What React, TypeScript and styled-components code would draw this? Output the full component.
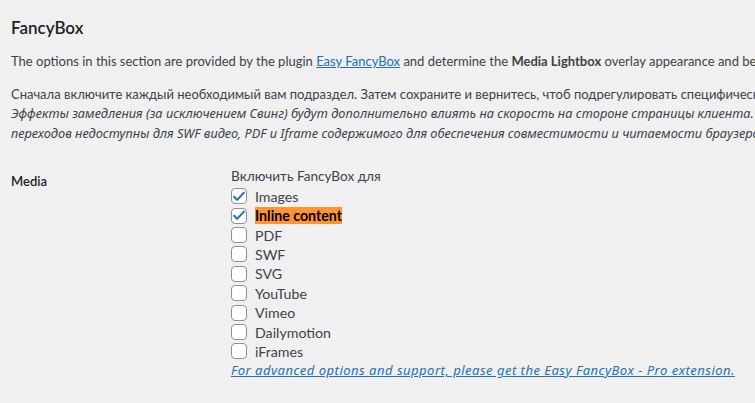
import React from "react";
import styled, { createGlobalStyle } from "styled-components";

const Global = createGlobalStyle`
  html, body {
    margin: 0;
    padding: 0;
    background: #f0f0f1;
    overflow: hidden;
  }
  body {
    font-family: "Lato", "Noto Sans", sans-serif;
    font-size: 13px;
    line-height: 1.5;
    color: #3c434a;
  }
`;

const Wrap = styled.div`
  padding: 0 0 0 11px;
  width: 1100px;
  white-space: nowrap;
`;

const Title = styled.h2`
  font-size: 17px;
  font-weight: 600;
  color: #1d2327;
  margin: 0;
  padding-top: 17px;
  line-height: 1.3;
`;

const Text = styled.p`
  margin: 13px 0 0;
`;

const Em = styled.em`
  font-family: "Noto Sans", sans-serif;
  font-size: 12.8px;
`;

const Link = styled.a<{ $italic?: boolean }>`
  color: #2271b1;
  text-decoration: underline;
  font-style: ${(p) => (p.$italic ? "italic" : "normal")};
  font-family: ${(p) => (p.$italic ? `"Noto Sans", sans-serif` : "inherit")};
  letter-spacing: ${(p) => (p.$italic ? "0.5px" : "normal")};
`;

const Table = styled.table`
  border-collapse: collapse;
  margin-top: 9px;
`;

const Th = styled.th`
  width: 200px;
  padding: 20px 10px 20px 0;
  text-align: left;
  vertical-align: top;
  font-weight: 600;
  color: #1d2327;
`;

const Td = styled.td`
  padding: 15px 10px;
  vertical-align: top;
`;

const Intro = styled.div`
  font-size: 13.6px;
  line-height: 19.5px;
`;

const Option = styled.label`
  display: flex;
  align-items: center;
  height: 19.4px;
`;

const Box = styled.span`
  box-sizing: border-box;
  width: 16px;
  height: 16px;
  border: 1px solid #8c8f94;
  border-radius: 4px;
  background: #fff;
  margin-right: 8px;
  display: flex;
  align-items: center;
  justify-content: center;
  flex: none;
`;

const Name = styled.span<{ $hl?: boolean }>`
  font-size: 14.2px;
  line-height: 17px;
  font-weight: ${(p) => (p.$hl ? 700 : 400)};
  color: ${(p) => (p.$hl ? "#000" : "#3c434a")};
  background: ${(p) => (p.$hl ? "#ff9432" : "transparent")};
`;

const Check = () => (
  <svg width="15" height="15" viewBox="0 0 20 20">
    <path d="M3 10.5l4.3 4.3L17 4.5" fill="none" stroke="#2271b1" strokeWidth="3" strokeLinecap="round" strokeLinejoin="round" />
  </svg>
);

const items = [
  { name: "Images", checked: true },
  { name: "Inline content", checked: true, hl: true },
  { name: "PDF" },
  { name: "SWF" },
  { name: "SVG" },
  { name: "YouTube" },
  { name: "Vimeo" },
  { name: "Dailymotion" },
  { name: "iFrames" },
];

export default function App() {
  return (
    <Wrap>
      <Global />
      <Title>FancyBox</Title>
      <Text>
        The options in this section are provided by the plugin <Link href="#">Easy FancyBox</Link> and determine the{" "}
        <strong>Media Lightbox</strong> overlay appearance and behaviour controlled by <strong>FancyBox</strong>.
      </Text>
      <Text>
        Сначала включите каждый необходимый вам подраздел. Затем сохраните и вернитесь, чтоб подрегулировать специфические настройки.
        <br />
        <Em>Эффекты замедления (за исключением Свинг) будут дополнительно влиять на скорость на стороне страницы клиента. Эффекты</Em>
        <br />
        <Em>переходов недоступны для SWF видео, PDF и Iframe содержимого для обеспечения совместимости и читаемости браузеров.</Em>
      </Text>
      <Table>
        <tbody>
          <tr>
            <Th>Media</Th>
            <Td>
              <Intro>Включить FancyBox для</Intro>
              {items.map((it) => (
                <Option key={it.name}>
                  <Box>{it.checked && <Check />}</Box>
                  <Name $hl={it.hl}>{it.name}</Name>
                </Option>
              ))}
              <Link href="#" $italic>
                For advanced options and support, please get the Easy FancyBox - Pro extension.
              </Link>
            </Td>
          </tr>
        </tbody>
      </Table>
    </Wrap>
  );
}
